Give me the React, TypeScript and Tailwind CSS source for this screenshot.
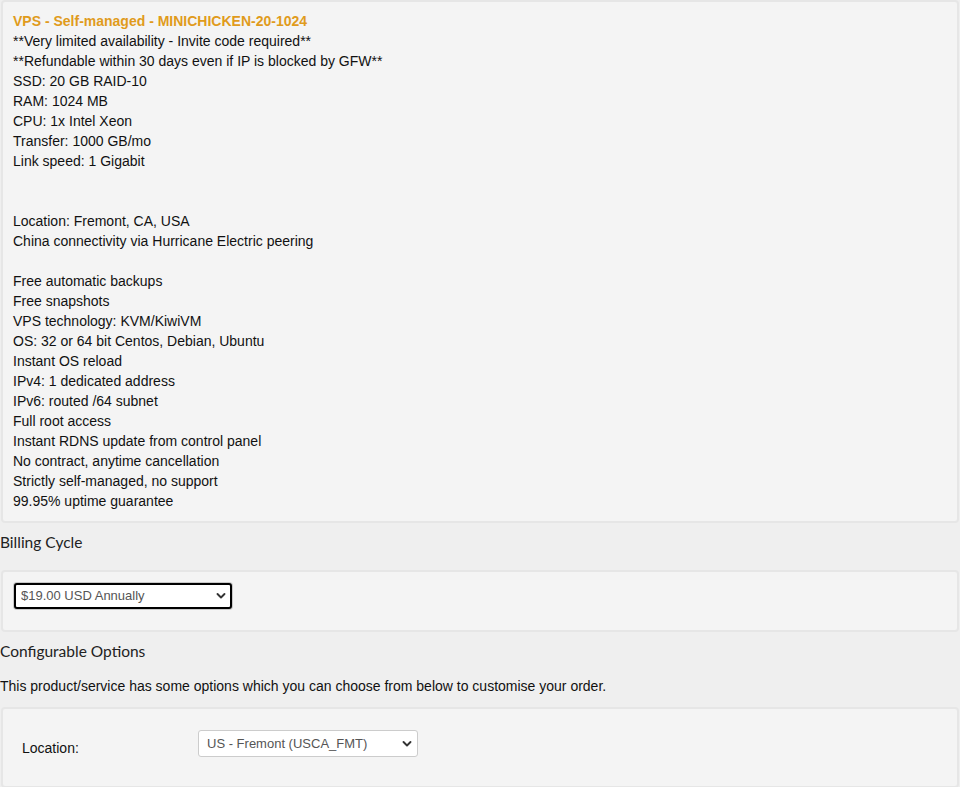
import React from "react";

const lines: string[] = [
  "**Very limited availability - Invite code required**",
  "**Refundable within 30 days even if IP is blocked by GFW**",
  "SSD: 20 GB RAID-10",
  "RAM: 1024 MB",
  "CPU: 1x Intel Xeon",
  "Transfer: 1000 GB/mo",
  "Link speed: 1 Gigabit",
  "",
  "",
  "Location: Fremont, CA, USA",
  "China connectivity via Hurricane Electric peering",
  "",
  "Free automatic backups",
  "Free snapshots",
  "VPS technology: KVM/KiwiVM",
  "OS: 32 or 64 bit Centos, Debian, Ubuntu",
  "Instant OS reload",
  "IPv4: 1 dedicated address",
  "IPv6: routed /64 subnet",
  "Full root access",
  "Instant RDNS update from control panel",
  "No contract, anytime cancellation",
  "Strictly self-managed, no support",
  "99.95% uptime guarantee",
];

function Chevron() {
  return (
    <svg
      className="pointer-events-none absolute right-[6px] top-1/2 -translate-y-1/2"
      width="10"
      height="7"
      viewBox="0 0 10 7"
      fill="none"
    >
      <path d="M1.5 1.5 L5 5 L8.5 1.5" stroke="#333" strokeWidth="1.9" strokeLinecap="round" strokeLinejoin="round" />
    </svg>
  );
}

export default function App() {
  return (
    <div
      className="min-h-[787px] w-[960px] bg-[#efefef] text-[14px] text-[#111]"
      style={{ fontFamily: '"Liberation Sans", Arial, sans-serif' }}
    >
      <div className="mx-[1px] rounded-[4px] border-2 border-[#e6e6e6] bg-[#f4f4f4] px-[10px] pb-[10px] pt-[9px] leading-[20px]">
        <div className="font-bold text-[#e09b1c]">VPS - Self-managed - MINICHICKEN-20-1024</div>
        {lines.map((l, i) => (
          <div key={i} className="h-[20px]">
            {l}
          </div>
        ))}
      </div>

      <div
        className="flex h-[47px] items-center pb-[7px] text-[15.5px] text-[#222]"
        style={{ fontFamily: 'Lato, "Open Sans", sans-serif' }}
      >
        Billing Cycle
      </div>

      <div className="mx-[1px] rounded-[4px] border-2 border-[#e6e6e6] bg-[#f4f4f4] px-[11px] pb-[21px] pt-[11px]">
        <div className="relative w-[218px]">
          <select
            defaultValue="a"
            className="h-[26px] w-full appearance-none rounded-[3px] border-2 border-black bg-white pl-[5px] text-[13px] text-[#555] outline-none ring-1 ring-[#c8c8c8]"
            style={{ fontFamily: '"Liberation Sans", Arial, sans-serif' }}
          >
            <option value="a">$19.00 USD Annually</option>
          </select>
          <Chevron />
        </div>
      </div>

      <div
        className="flex h-[39px] items-center text-[15.5px] text-[#222]"
        style={{ fontFamily: 'Lato, "Open Sans", sans-serif' }}
      >
        Configurable Options
      </div>
      <div className="flex h-[36px] items-start pt-[5px] text-[14px] text-[#111]">
        This product/service has some options which you can choose from below to customise your order.
      </div>

      <div className="mx-[1px] flex h-[81px] items-start rounded-[4px] border-2 border-[#e6e6e6] bg-[#f4f4f4] pt-[21px]">
        <div className="w-[195px] pl-[19px] pt-[8px] text-[14px] text-[#111]">Location:</div>
        <div className="relative w-[220px]">
          <select
            defaultValue="a"
            className="h-[27px] w-full appearance-none rounded-[3px] border border-[#ccc] bg-white pl-[8px] pt-[1px] text-[13px] text-[#555] outline-none"
            style={{ fontFamily: '"Liberation Sans", Arial, sans-serif' }}
          >
            <option value="a">US - Fremont (USCA_FMT)</option>
          </select>
          <Chevron />
        </div>
      </div>
    </div>
  );
}
